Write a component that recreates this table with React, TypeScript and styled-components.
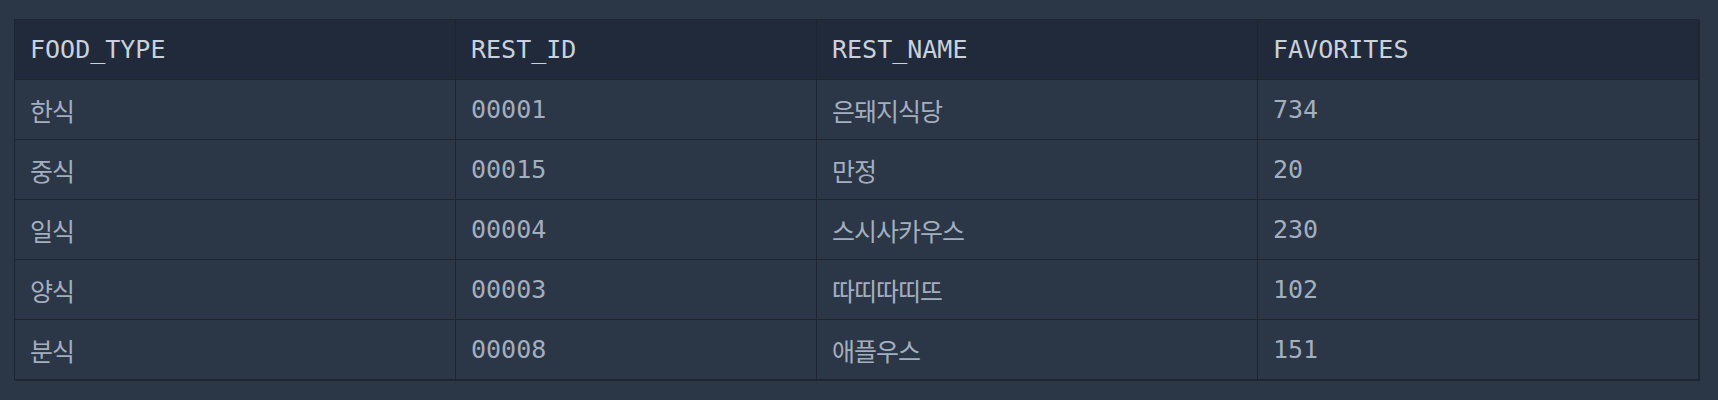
import React from "react";
import styled, { createGlobalStyle } from "styled-components";

type Restaurant = {
  foodType: string;
  restId: string;
  restName: string;
  favorites: number;
};

const rows: Restaurant[] = [
  { foodType: "한식", restId: "00001", restName: "은돼지식당", favorites: 734 },
  { foodType: "중식", restId: "00015", restName: "만정", favorites: 20 },
  { foodType: "일식", restId: "00004", restName: "스시사카우스", favorites: 230 },
  { foodType: "양식", restId: "00003", restName: "따띠따띠뜨", favorites: 102 },
  { foodType: "분식", restId: "00008", restName: "애플우스", favorites: 151 },
];

const columns = ["FOOD_TYPE", "REST_ID", "REST_NAME", "FAVORITES"];
const widths = [441, 361, 441, 441];

const GlobalStyle = createGlobalStyle`
  html, body {
    margin: 0;
    background-color: #2b3646;
  }
`;

const Page = styled.div`
  min-height: 400px;
  padding: 19px 14px;
  box-sizing: border-box;
  background-color: #2b3646;
`;

const Table = styled.table`
  border-collapse: collapse;
  table-layout: fixed;
  width: 1684px;
  border: 1px solid #1d2432;
  box-shadow: 1px 1px 0 #1f2635;
  font-family: "DejaVu Sans Mono", "Noto Sans CJK KR", monospace;
  font-size: 25px;
`;

const HeadCell = styled.th`
  height: 59px;
  padding: 0 15px;
  text-align: left;
  font-weight: normal;
  color: #c9d1dc;
  background-color: #212a3b;
  border: 1px solid #1d2432;
`;

const Cell = styled.td<{ $hangul?: boolean }>`
  height: 59px;
  padding: 0 15px;
  color: #a3aebe;
  background-color: #2b3647;
  border: 1px solid #1d2432;
  letter-spacing: ${(p) => (p.$hangul ? "-1px" : "0")};
`;

export default function App() {
  return (
    <Page>
      <GlobalStyle />
      <Table>
        <colgroup>
          {widths.map((w, i) => (
            <col key={i} style={{ width: w }} />
          ))}
        </colgroup>
        <thead>
          <tr>
            {columns.map((c) => (
              <HeadCell key={c}>{c}</HeadCell>
            ))}
          </tr>
        </thead>
        <tbody>
          {rows.map((r) => (
            <tr key={r.restId}>
              <Cell $hangul>{r.foodType}</Cell>
              <Cell>{r.restId}</Cell>
              <Cell $hangul>{r.restName}</Cell>
              <Cell>{r.favorites}</Cell>
            </tr>
          ))}
        </tbody>
      </Table>
    </Page>
  );
}
